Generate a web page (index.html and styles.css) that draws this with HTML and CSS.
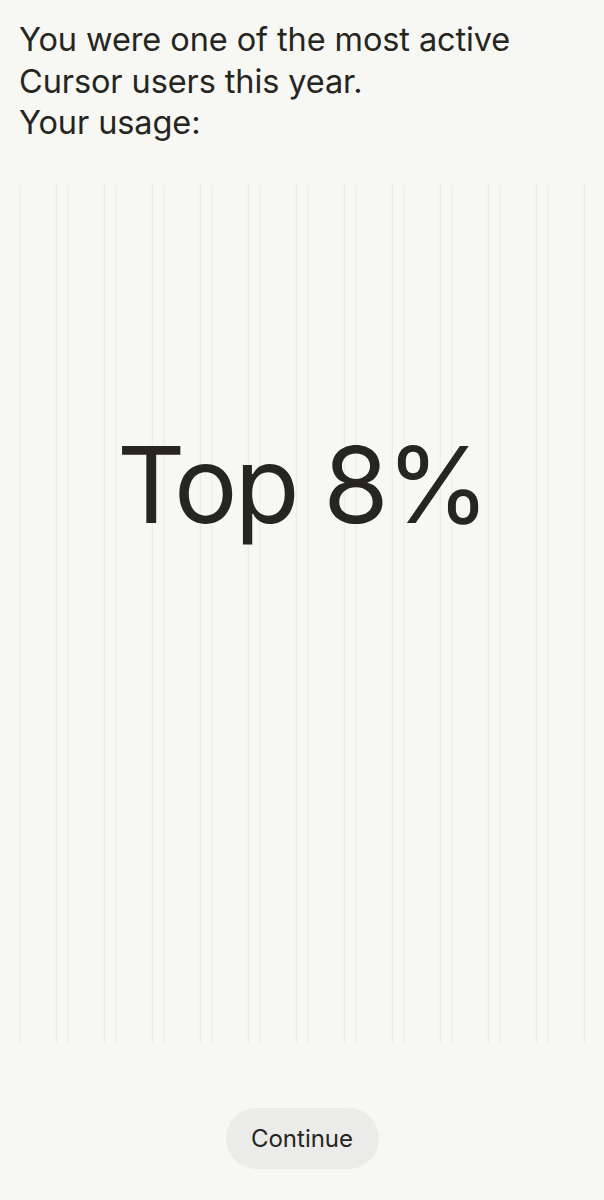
FILE: index.html
```html
<!DOCTYPE html>
<html lang="en">
<head>
  <meta charset="UTF-8" />
  <meta name="viewport" content="width=device-width, initial-scale=1.0" />
  <title>Year in Cursor</title>
  <link rel="stylesheet" href="styles.css">
</head>
<body>
  <main class="slide">
    <p class="intro">You were one of the most active<br>Cursor users this year.<br>Your usage:</p>

    <div class="stage">
      <div class="cols">
        <span></span><span></span><span></span><span></span><span></span><span></span>
        <span></span><span></span><span></span><span></span><span></span><span></span>
      </div>
      <div class="stat">Top 8%</div>
    </div>

    <div class="actions">
      <button class="next-btn">Continue</button>
    </div>
  </main>
</body>
</html>
```

FILE: styles.css
```css
:root{--ink:#26251e;--bg:#f7f7f4}
*,*::before,*::after{box-sizing:border-box;margin:0;padding:0}
body{font-family:Inter,'Liberation Sans',sans-serif;background:var(--bg);color:var(--ink);min-height:100vh}
.slide{padding:19px 19px 0;display:flex;flex-direction:column}
.intro{font-size:32.5px;line-height:41.5px;letter-spacing:-.1px;font-weight:400}

/* 12 column backdrop with the big number laid over it */
.stage{display:grid;margin-top:40px;height:860px}
.cols,.stat{grid-area:1/1}
.cols{display:grid;grid-template-columns:repeat(12,1fr);column-gap:10px}
.cols span{border-left:1px solid rgba(0,0,0,.04);border-right:1px solid rgba(0,0,0,.04);box-shadow:inset 2px 0 2px rgba(0,0,0,.015),inset -2px 0 2px rgba(0,0,0,.015)}
.stat{align-self:start;justify-self:center;margin-top:248px;font-size:106px;line-height:1;letter-spacing:-3px;font-weight:400}

.actions{display:flex;justify-content:center;margin-top:64px}
.next-btn{font-family:inherit;font-size:24px;color:var(--ink);background:#ebebe9;border:none;border-radius:999px;width:153px;height:61px;cursor:pointer}
```
